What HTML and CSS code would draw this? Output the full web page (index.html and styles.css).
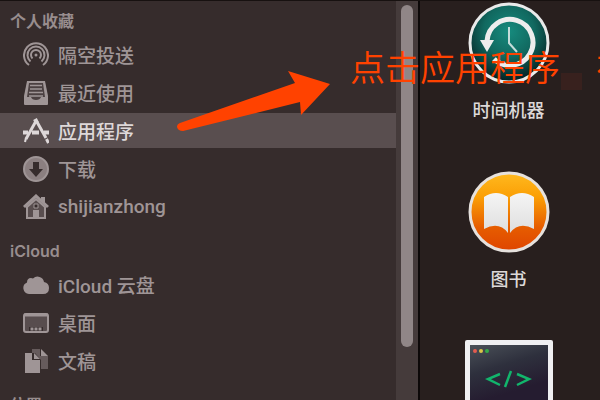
FILE: index.html
```html
<!DOCTYPE html>
<html lang="zh-CN">
<head>
  <meta charset="UTF-8">
  <meta name="viewport" content="width=device-width, initial-scale=1">
  <title>应用程序</title>
  <link rel="stylesheet" href="styles.css">
</head>
<body>
<div class="finder">
  <nav class="sidebar">
    <div class="lists">
      <h2>个人收藏</h2>
      <a class="item" href="#airdrop">
        <svg class="icon" viewBox="0 0 26 26" fill="none" stroke="currentColor" stroke-width="2">
          <path d="M6 23A12 12 0 1 1 20 23"/>
          <path d="M7.500 19.500A8.500 8.500 0 1 1 18.500 19.500"/>
          <path d="M9.500 16.500A5 5 0 1 1 16.500 16.500"/>
          <circle cx="13" cy="13" r="1.500" fill="currentColor" stroke="none"/>
        </svg>
        隔空投送
      </a>
      <a class="item" href="#recents">
        <svg class="icon" viewBox="0 0 26 26">
          <path d="M4 1h18l3 15v8q0 1-1 1H2q-1 0-1-1v-8z" fill="currentColor"/>
          <path d="M6 3h14l2 14h-4q-1 3-5 3t-5-3H4z" fill="#4b4041"/>
          <path d="M7 5.500h12M7 9h12M6 12.500h14M6 16h14" stroke="currentColor" stroke-width="1.500"/>
        </svg>
        最近使用
      </a>
      <a class="item selected" href="#applications">
        <svg class="icon" viewBox="0 0 26 26" fill="none" stroke="currentColor">
          <path d="M0 14.500h5M9 14.500h7M21 14.500h5" stroke-width="4"/>
          <path d="M13 3L3 21" stroke-width="3"/>
          <path d="M3 20l-1 4" stroke-width="2"/>
          <path d="M12 1l2 4" stroke-width="4"/>
          <path d="M14 4l9 16M23.500 21l2 4" stroke-width="3"/>
        </svg>
        应用程序
      </a>
      <a class="item" href="#downloads">
        <svg class="icon" viewBox="0 0 26 26">
          <circle cx="13" cy="13" r="12" fill="#8b7f80" stroke="currentColor" stroke-width="2"/>
          <path d="M10 6h6v7h4l-7 8-7-8h4z" fill="#362c2c"/>
        </svg>
        下载
      </a>
      <a class="item" href="#home">
        <svg class="icon" viewBox="0 0 26 26">
          <path d="M4 13l9-8 9 8v11H4z" fill="#594e4f" stroke="currentColor" stroke-width="2"/>
          <path d="M18 3h4v8l-4-4z" fill="currentColor"/>
          <path d="M1 13L13 2l12 11" fill="none" stroke="currentColor" stroke-width="3"/>
          <path d="M11 10h4v4h-4z" fill="#362c2c" stroke="currentColor"/>
          <path d="M10 16h6v8h-6z" fill="currentColor"/>
        </svg>
        shijianzhong
      </a>

      <h2>iCloud</h2>
      <a class="item" href="#drive">
        <svg class="icon" viewBox="0 0 26 26">
          <path d="M6 22a6 6 0 0 1-2-11.500Q4 6 8 6q1 0 2 .5A6.500 6.500 0 0 1 21 10Q26 11 26 16 26 22 20 22z" fill="currentColor"/>
        </svg>
        iCloud 云盘
      </a>
      <a class="item" href="#desktop">
        <svg class="icon" viewBox="0 0 26 26">
          <rect x="1" y="4" width="24" height="18" rx="2" fill="#584d4e" stroke="currentColor" stroke-width="2"/>
          <path d="M1 5h24" stroke="currentColor" stroke-width="3"/>
          <path d="M6 17h14v4H6z" fill="#362c2c"/>
          <path d="M7.500 19h3M11.500 19h3M15.500 19h3" stroke="currentColor" stroke-width="3"/>
        </svg>
        桌面
      </a>
      <a class="item" href="#documents">
        <svg class="icon" viewBox="0 0 26 26">
          <path d="M9 1h8v7h8v13h-7v-9l-6-7H9z" fill="#665b5c"/>
          <path d="M18 1l7 7h-7z" fill="currentColor"/>
          <path d="M2 5h7v7h8v13H2z" fill="currentColor"/>
          <path d="M11 5l6 6h-6z" fill="currentColor"/>
        </svg>
        文稿
      </a>

      <h2>位置</h2>
    </div>
    <div class="track"><div class="thumb"></div></div>
  </nav>

  <main class="apps">
    <a class="app" href="#time-machine">
      <svg class="app-icon" viewBox="0 0 82 82">
        <defs>
          <radialGradient id="teal" cx="50%" cy="35%" r="65%">
            <stop offset="0" stop-color="#168b7e"/>
            <stop offset=".5" stop-color="#116960"/>
            <stop offset="1" stop-color="#041e20"/>
          </radialGradient>
        </defs>
        <circle cx="41" cy="41" r="39" fill="url(#teal)" stroke="#e9eaea" stroke-width="3"/>
        <path d="M19 39A23 23 0 1 1 26 57" fill="none" stroke="#ededed" stroke-width="5"/>
        <path d="M12 38h14l-7 12z" fill="#ededed"/>
        <path d="M41 25v16l8 9" fill="none" stroke="#c4dcd9" stroke-width="2"/>
      </svg>
      <span>时间机器</span>
    </a>
    <a class="app" href="#books">
      <svg class="app-icon" viewBox="0 0 82 82">
        <defs>
          <linearGradient id="orange" x1="0" y1="0" x2="0" y2="1">
            <stop offset="0" stop-color="#ffb91f"/>
            <stop offset=".3" stop-color="#fba006"/>
            <stop offset=".7" stop-color="#e65c00"/>
            <stop offset="1" stop-color="#df4500"/>
          </linearGradient>
          <linearGradient id="page" x1="0" y1="0" x2="0" y2="1">
            <stop offset="0" stop-color="#f5f5f5"/>
            <stop offset="1" stop-color="#dedede"/>
          </linearGradient>
        </defs>
        <circle cx="41" cy="41" r="39" fill="url(#orange)" stroke="#e6e1dd" stroke-width="3"/>
        <path d="M16 26q12-8 24 0v36q-9-12-24-4z" fill="url(#page)"/>
        <path d="M66 26q-12-8-24 0v36q9-12 24-4z" fill="url(#page)"/>
      </svg>
      <span>图书</span>
    </a>
    <a class="app" href="#terminal" aria-label="Terminal">
      <svg class="app-icon wide" viewBox="0 0 88 88">
        <defs>
          <linearGradient id="screen" x1="0" y1="0" x2=".3" y2="1">
            <stop offset="0" stop-color="#4a5058"/>
            <stop offset=".35" stop-color="#2e303d"/>
            <stop offset=".7" stop-color="#251c30"/>
          </linearGradient>
        </defs>
        <rect width="88" height="88" rx="2" fill="#f0f0f2"/>
        <rect x="5" y="5" width="78" height="78" fill="url(#screen)"/>
        <circle cx="10" cy="11" r="2" fill="#e25b50"/>
        <circle cx="16" cy="11" r="2" fill="#dcc548"/>
        <circle cx="22" cy="11" r="2" fill="#35aa4a"/>
        <path d="M35 34l-12 5 12 6M46 31l-6 16M52 34l12 5-12 6" fill="none" stroke="#12b56c" stroke-width="2.500"/>
      </svg>
    </a>
  </main>

  <svg class="arrow" viewBox="0 0 154 64">
    <path d="M4 53L119 13l-7-12 42 13-29 31-1-13L7 61q-5 0-6-4 0-3 3-4z" fill="#ff4200"/>
  </svg>
  <p class="note">点击应用程序<span class="patch"></span>在</p>
</div>
</body>
</html>
```

FILE: styles.css
```css
* {
  box-sizing: border-box;
}

body {
  margin: 0;
  background: #281f1e;
  font-family: Inter, "Noto Sans CJK SC", sans-serif;
}

.finder {
  position: relative;
  display: flex;
  height: 100vh;
  overflow: hidden;
  border-top: 1px solid #171110;
}

.sidebar {
  display: flex;
  flex: 0 0 70%;
  background: #362c2c;
  border-right: 2px solid #0c0808;
}

.lists {
  flex: 1;
  padding-top: 4px;
}

h2 {
  margin: 11px 0 0;
  padding-left: 10px;
  font-size: 16px;
  font-weight: 600;
  line-height: 32px;
  color: #988d8e;
}

h2:first-child {
  margin-top: 0;
}

.item {
  display: flex;
  align-items: center;
  gap: 9px;
  height: 35px;
  margin-bottom: 3px;
  padding-left: 23px;
  font-family: Roboto, "Noto Sans CJK SC", sans-serif;
  font-size: 19px;
  font-weight: 500;
  color: #9f9596;
  text-decoration: none;
}

.item.selected {
  background: #594e4f;
  color: #ded8d9;
}

.icon {
  width: 26px;
  height: 26px;
}

.track {
  width: 22px;
  padding: 4px 4px 0 5px;
  background: #453b3b;
}

.thumb {
  width: 12px;
  height: 342px;
  border-radius: 6px;
  background: #908687;
}

.apps {
  display: flex;
  flex: 1;
  flex-direction: column;
  align-items: center;
  padding: 1px 3px 0 0;
}

.app {
  display: flex;
  flex: none;
  flex-direction: column;
  align-items: center;
  gap: 14px;
  height: 169px;
  font-size: 18px;
  font-weight: 500;
  line-height: 26px;
  color: #ddd9d8;
  text-decoration: none;
}

.app-icon {
  width: 82px;
  height: 82px;
}

.app-icon.wide {
  width: 88px;
  height: 88px;
}

/* arrow and note lie over both panes */
.arrow {
  position: absolute;
  top: 69px;
  left: 176px;
  width: 154px;
}

.note {
  position: absolute;
  top: 42px;
  left: 350px;
  margin: 0;
  font-size: 35px;
  font-weight: 350;
  line-height: 50px;
  color: #ff4200;
  white-space: nowrap;
}

.patch {
  display: inline-block;
  width: 21px;
  height: 17px;
  margin: 0 14px 0 1px;
  vertical-align: -9px;
  background: #38211e;
}
```
